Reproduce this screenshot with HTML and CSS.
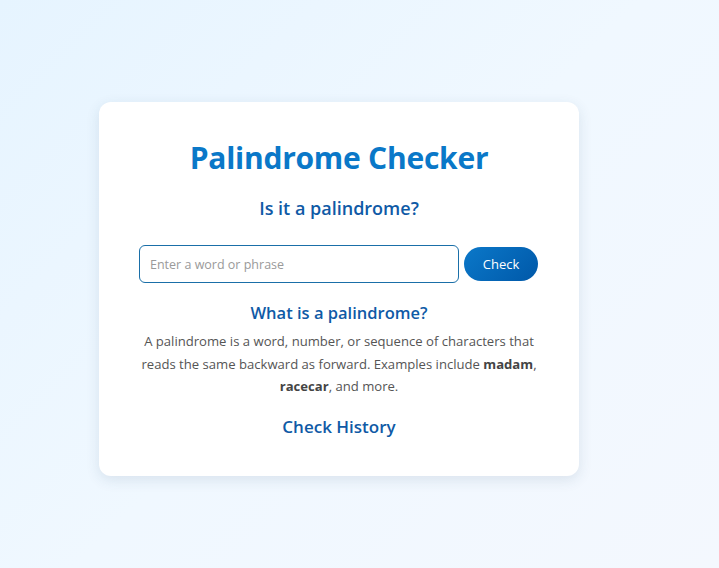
FILE: index.html
```html
<!DOCTYPE html>
<html lang="en">
<head>
<meta charset="utf-8">
<title>Palindrome Checker</title>
<link rel="stylesheet" href="styles.css">
</head>
<body>
<main class="page">
  <section class="card">
    <h1 class="title">Palindrome Checker</h1>
    <h2 class="subtitle">Is it a palindrome?</h2>
    <form class="check-form">
      <input class="text-input" type="text" placeholder="Enter a word or phrase">
      <button class="check-btn" type="button">Check</button>
    </form>
    <h3 class="info-title">What is a palindrome?</h3>
    <p class="info-text">A palindrome is a word, number, or sequence of characters that reads the same backward as forward. Examples include <strong>madam</strong>, <strong>racecar</strong>, and more.</p>
    <h2 class="history-title">Check History</h2>
  </section>
</main>
</body>
</html>
```
FILE: styles.css
```css
* { box-sizing: border-box; }
html, body { margin: 0; height: 100%; }
body {
  font-family: "Open Sans", "Noto Sans", sans-serif;
  background: linear-gradient(135deg, #e6f4ff 0%, #f0f8ff 50%, #f4f8fe 100%);
}
.page {
  padding: 102px 0 0 99px;
}
.card {
  width: 480px;
  height: 374px;
  background: #fff;
  border-radius: 12px;
  box-shadow: 0 4px 14px rgba(40, 70, 110, 0.12);
  padding: 35px 40px 0;
  text-align: center;
}
.title {
  margin: 0;
  font-size: 30px;
  font-weight: 700;
  color: #0a78c8;
  line-height: 42px;
  letter-spacing: -0.25px;
}
.subtitle {
  margin: 16px 0 0;
  font-size: 18px;
  font-weight: 600;
  color: #0f5aa6;
  line-height: 26px;
}
.check-form {
  display: flex;
  gap: 5px;
  margin-top: 24px;
  align-items: center;
}
.text-input {
  width: 320px;
  height: 38px;
  border: 1px solid #1a6fa8;
  border-radius: 6px;
  padding: 0 10px;
  font-family: inherit;
  font-size: 12.5px;
  color: #333;
  outline: none;
}
.text-input::placeholder { color: #9a9a9a; }
.check-btn {
  width: 74px;
  height: 34px;
  border: none;
  border-radius: 17px;
  background: linear-gradient(135deg, #0b78c9 0%, #0058a8 100%);
  color: #fff;
  font-family: inherit;
  font-size: 13px;
}
.info-title {
  margin: 17px 0 0;
  font-size: 16.5px;
  font-weight: 600;
  color: #0f5aa6;
  line-height: 26px;
}
.info-text {
  margin: 4px 0 0;
  font-size: 13.1px;
  line-height: 22.5px;
  color: #555;
  letter-spacing: 0;
}
.info-text strong { color: #444; }
.history-title {
  margin: 16px 0 0;
  font-size: 17px;
  font-weight: 600;
  color: #0f5aa6;
  line-height: 26px;
}
```
